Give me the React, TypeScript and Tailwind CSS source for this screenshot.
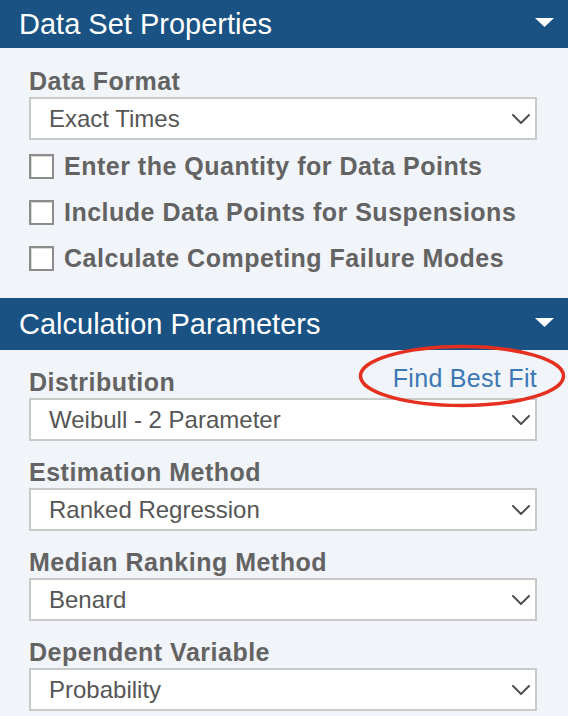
import { ReactNode } from "react"

const fields = [
  { label: "Estimation Method", value: "Ranked Regression" },
  { label: "Median Ranking Method", value: "Benard" },
  { label: "Dependent Variable", value: "Probability" },
]

const options = [
  "Enter the Quantity for Data Points",
  "Include Data Points for Suspensions",
  "Calculate Competing Failure Modes",
]

export default function App() {
  return (
    <div className="h-[716px] w-[568px] overflow-hidden bg-[#f1f4f8] font-['Liberation_Sans',Arial,sans-serif]">
      <PanelHeader title="Data Set Properties" className="h-[48px]" />

      <div className="px-[29px] pr-[31px]">
        <FieldLabel className="mt-[19px]">Data Format</FieldLabel>
        <Select value="Exact Times" />

        <div className="mt-[3px] flex flex-col">
          {options.map((option) => (
            <Checkbox key={option} label={option} />
          ))}
        </div>
      </div>

      <PanelHeader title="Calculation Parameters" className="mt-[17px] h-[52px]" />

      <div className="px-[29px] pr-[31px]">
        <div className="mt-[18px] flex items-start justify-between">
          <FieldLabel>Distribution</FieldLabel>

          <a className="relative top-[-4px] cursor-pointer text-[25px] leading-[28px] tracking-[0.3px] text-[#3b78b6]">
            Find Best Fit
            <svg
              className="pointer-events-none absolute left-[-35px] top-[-20px]"
              width="208"
              height="64"
              viewBox="0 0 208 64"
              fill="none"
            >
              <ellipse
                cx="104"
                cy="32"
                rx="101.5"
                ry="29.5"
                stroke="#e5301f"
                strokeWidth="3.5"
              />
            </svg>
          </a>
        </div>
        <Select value="Weibull - 2 Parameter" />

        {fields.map((field) => (
          <div key={field.label}>
            <FieldLabel className="mt-[17px]">{field.label}</FieldLabel>
            <Select value={field.value} />
          </div>
        ))}
      </div>
    </div>
  )
}

interface PanelHeaderProps {
  title: string
  className?: string
}

function PanelHeader(props: PanelHeaderProps) {
  return (
    <div
      className={`flex items-center justify-between bg-[#1a5283] pl-[19px] pr-[14px] ${props.className ?? ""}`}
    >
      <h2 className="text-[29px] font-normal leading-none text-white">
        {props.title}
      </h2>

      <svg className="mb-[4px]" width="19" height="9" viewBox="0 0 19 9">
        <path d="M0 0 H19 L9.5 9 Z" fill="#ffffff" />
      </svg>
    </div>
  )
}

function FieldLabel(props: { children: ReactNode; className?: string }) {
  return (
    <p
      className={`mb-[2px] text-[25px] font-bold leading-[28px] tracking-[0.5px] text-[#636363] ${props.className ?? ""}`}
    >
      {props.children}
    </p>
  )
}

function Select(props: { value: string }) {
  return (
    <div className="flex h-[43px] items-center justify-between border-2 border-[#c9c9c9] bg-white pl-[18px] pr-[5px]">
      <span className="text-[24px] leading-none text-[#565656]">
        {props.value}
      </span>

      <svg width="18" height="10" viewBox="0 0 18 10" fill="none">
        <path
          d="M1 1 L9 9 L17 1"
          stroke="#505050"
          strokeWidth="2"
          strokeLinecap="round"
          strokeLinejoin="round"
        />
      </svg>
    </div>
  )
}

function Checkbox(props: { label: string }) {
  return (
    <label className="flex h-[46px] items-center gap-[10px]">
      <span className="h-[25px] w-[25px] shrink-0 border-2 border-[#8c8c8c] bg-white shadow-[inset_1px_1px_0_#d8d8d8]" />
      <span className="text-[25px] font-bold leading-none tracking-[0.5px] text-[#636363]">
        {props.label}
      </span>
    </label>
  )
}
